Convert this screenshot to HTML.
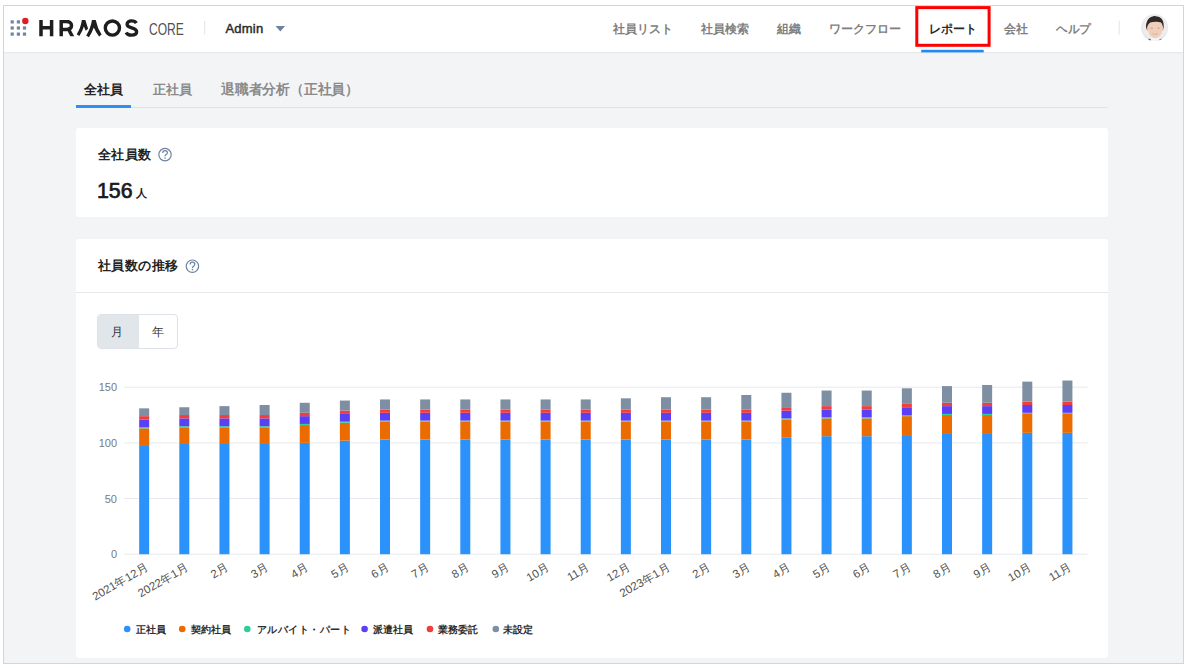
<!DOCTYPE html>
<html><head><meta charset="utf-8">
<style>
*{box-sizing:border-box;margin:0;padding:0}
html,body{width:1189px;height:668px;overflow:hidden;background:#fff;font-family:"Liberation Sans",sans-serif;color:#222}
.abs{position:absolute}
svg{font-family:"Liberation Sans",sans-serif}
#frame{position:absolute;left:3px;top:5px;width:1181px;height:659px;border:1px solid #d5d5d5;background:#f3f4f6;overflow:hidden}
#hdr{position:absolute;left:0;top:0;width:1179px;height:46px;background:#fff;box-shadow:0 1px 1.5px rgba(0,0,0,.06)}
.t{position:absolute;white-space:nowrap;line-height:1}
.nav{font-size:12px;font-weight:bold;color:#808080;top:23px !important}
.leg{font-size:10px;font-weight:bold;color:#2e2e2e;margin-top:1.5px;margin-left:1.5px;letter-spacing:0.25px}
.hd{-webkit-text-stroke:0.2px #222}
.card{position:absolute;background:#fff;border-radius:3px}
</style></head><body>
<div id="frame">
 <div id="hdr"></div>
</div>

<!-- header texts -->
<div class="t" style="left:148.5px;top:20.7px;font-size:16.5px;color:#505050;transform:scaleX(0.73);transform-origin:0 0">CORE</div>
<div class="t" style="left:225.5px;top:21.5px;font-size:13px;font-weight:normal;-webkit-text-stroke:0.45px #2a2a2a;color:#2a2a2a;letter-spacing:0.2px">Admin</div>
<div class="t nav" style="left:613px;top:22px">社員リスト</div>
<div class="t nav" style="left:701px;top:22px">社員検索</div>
<div class="t nav" style="left:777px;top:22px">組織</div>
<div class="t nav" style="left:828.5px;top:22px">ワークフロー</div>
<div class="t nav" style="left:929px;top:22px;color:#2a2a2a">レポート</div>
<div class="t nav" style="left:1004px;top:22px">会社</div>
<div class="t nav" style="left:1056px;top:22px;transform:scaleX(0.97);transform-origin:0 0">ヘルプ</div>
<!-- tabs -->
<div class="abs" style="left:76px;top:107px;width:1032px;height:1px;background:#dfe2e6"></div>
<div class="abs" style="left:76px;top:105px;width:55px;height:3px;background:#2b8ff5"></div>
<div class="t" style="left:84px;top:83px;font-size:13px;font-weight:bold;color:#222">全社員</div>
<div class="t" style="left:153px;top:83px;font-size:13px;font-weight:bold;color:#8a8a8a">正社員</div>
<div class="t" style="left:220.5px;top:82px;font-size:14px;font-weight:bold;color:#8a8a8a;transform:scaleX(0.985);transform-origin:0 0">退職者分析（正社員）</div>
<!-- card1 -->
<div class="card" style="left:76px;top:128px;width:1032px;height:89px"></div>
<div class="t" style="left:98px;top:147.5px;font-size:13px;font-weight:bold;color:#222;letter-spacing:0.3px">全社員数</div>
<div class="t" style="left:96.5px;top:179.5px;font-size:22px;font-weight:normal;-webkit-text-stroke:0.7px #1a1a1a;color:#1a1a1a;transform:scaleX(0.97);transform-origin:0 0">156</div>
<div class="t" style="left:136px;top:188px;font-size:11px;font-weight:bold;color:#1a1a1a">人</div>
<!-- card2 -->
<div class="card" style="left:76px;top:239px;width:1032px;height:419px"></div>
<div class="abs" style="left:76px;top:292px;width:1032px;height:1px;background:#e6e8eb"></div>
<div class="t" style="left:97.5px;top:258.5px;font-size:13px;font-weight:bold;color:#222;letter-spacing:0.5px">社員数の推移</div>
<div class="abs" style="left:96.5px;top:314px;width:81.5px;height:34.5px;border:1px solid #dde2e8;border-radius:4px;overflow:hidden;background:#fff">
 <div class="abs" style="left:0;top:0;width:41px;height:33px;background:#e1e6eb"></div>
</div>
<div class="t" style="left:111px;top:326px;font-size:12px;color:#333">月</div>
<div class="t" style="left:151.5px;top:326px;font-size:12px;color:#333">年</div>
<!-- legend -->
<div class="t leg" style="left:134px;top:623px">正社員</div>
<div class="t leg" style="left:189px;top:623px">契約社員</div>
<div class="t leg" style="left:255px;top:623px;letter-spacing:0.55px">アルバイト・パート</div>
<div class="t leg" style="left:371px;top:623px">派遣社員</div>
<div class="t leg" style="left:436px;top:623px">業務委託</div>
<div class="t leg" style="left:501px;top:623px">未設定</div>
<!-- page-space overlay -->
<svg class="abs" style="left:0;top:0" width="1189" height="668" viewBox="0 0 1189 668">
 <!-- logo dots -->
 <g fill="#6f86a3">
  <rect x="10.6" y="20.3" width="3.2" height="3.2"/><rect x="16.8" y="20.3" width="3.2" height="3.2"/>
  <rect x="10.6" y="26.4" width="3.2" height="3.2"/><rect x="16.8" y="26.4" width="3.2" height="3.2"/><rect x="22.9" y="26.4" width="3.2" height="3.2"/>
  <rect x="10.6" y="32.5" width="3.2" height="3.2"/><rect x="16.8" y="32.5" width="3.2" height="3.2"/><rect x="22.9" y="32.5" width="3.2" height="3.2"/>
 </g>
 <circle cx="25.3" cy="21" r="3.2" fill="#dc1e26"/>
 <!-- HRMOS -->
 <defs><clipPath id="lc"><rect x="30" y="19.9" width="120" height="17.5"/></clipPath></defs>
 <g fill="none" stroke="#1e1e1e" stroke-width="3.5" clip-path="url(#lc)">
  <path d="M41 19.9V36.3M51.6 19.9V36.3M41 27.7H51.6"/>
  <path d="M61.2 36.3V21.5H66.3C69.8 21.5 71.5 23.4 71.5 25.5C71.5 27.7 69.8 29.4 66.3 29.4H61.2"/><path stroke="none" fill="#1e1e1e" d="M66.2 28.6L70 28.6L74.2 36.3L70.3 36.3Z"/>
  <path stroke="none" fill="#1e1e1e" d="M81.9 19.8H85.3L88.1 28.7L85.7 30.7L83.9 26.4Q82.4 31.5 79.3 35.9L76.7 34.2Q80.6 28.5 81.9 19.8ZM92 19.8H95.7Q97.3 28 101.6 34.6L99.1 36.5Q95.6 31.8 93.8 27.4Q92 32.5 88.9 37.3L86.2 35.4Q90.5 29 92 19.8Z"/>
 </g>
 <g fill="none" stroke="#1e1e1e" stroke-width="3.4">
  <circle cx="112.4" cy="28.05" r="7.1"/>
  <path d="M136.3 23.1C135.3 21.3 133.5 20.9 131.5 20.9C128.8 20.9 127.1 22.3 127.1 24.3C127.1 29.1 136.6 26.8 136.6 31.8C136.6 34.1 134.5 35.1 131.5 35.1C129.1 35.1 127 34.2 126.1 32.4"/>
 </g>
 <!-- separators -->
 <rect x="204.2" y="21" width="1" height="13.5" fill="#dfe3e8"/>
 <rect x="1118.7" y="20.7" width="1" height="14" fill="#dfe3e8"/>
 <!-- caret -->
 <path d="M275.5 26H285.1L280.3 31.5Z" fill="#6f83a0"/>
 <!-- avatar -->
 <defs>
  <radialGradient id="avbg" cx="0.5" cy="0.45" r="0.55"><stop offset="0" stop-color="#f6f6f6"/><stop offset="0.75" stop-color="#ececec"/><stop offset="1" stop-color="#d9d9d9"/></radialGradient>
  <clipPath id="avc"><circle cx="1154.6" cy="27.6" r="13.5"/></clipPath>
 </defs>
 <g clip-path="url(#avc)">
  <rect x="1140" y="13" width="30" height="30" fill="url(#avbg)"/>
  <path d="M1147 41C1148 37.5 1151 37 1155 37C1159 37 1162 37.5 1163 41Z" fill="#f4f4f4"/>
  <rect x="1148.5" y="38.8" width="2.2" height="1.6" fill="#50607a"/><rect x="1159.5" y="38.8" width="2.2" height="1.6" fill="#6a7a92"/>
  <ellipse cx="1147.6" cy="28.8" rx="1.2" ry="2" fill="#dfb49a"/>
  <ellipse cx="1162.6" cy="28.8" rx="1.2" ry="2" fill="#dfb49a"/>
  <ellipse cx="1155.2" cy="29.2" rx="7.2" ry="9" fill="#efcfbb"/><rect x="1147.5" y="20.5" width="15" height="9" rx="3" fill="#efcfbb"/><path d="M1150.6 28.2h2.2M1157.4 28.2h2.2" stroke="#7a5a50" stroke-width="0.8" opacity="0.6"/>
  <path d="M1146.2 29.5C1145.2 22 1148.5 16.6 1153.4 16.2C1154.5 15.8 1156 16 1157 16.6C1161.5 17 1164.5 21 1163.6 28.8C1162.6 26 1162.3 23.5 1161 22.4C1158.5 21.6 1154 21.2 1150.2 22.4C1148.6 23.2 1147.6 25.5 1146.2 29.5Z" fill="#2d2a28"/>
  <path d="M1152.3 33.6C1153.8 34.6 1156.6 34.6 1158.1 33.6" stroke="#d9a79a" stroke-width="0.9" fill="none"/>
 </g>
 
 <!-- help icons -->
 <g fill="none" stroke="#6f84a0" stroke-width="1.2">
  <circle cx="165" cy="154.6" r="6.2"/><path d="M162.70 153.00C162.70 151.40 163.80 150.60 165.00 150.60C166.40 150.60 167.40 151.50 167.40 152.70C167.40 154.40 165.00 154.70 165.00 156.30"/>
  <circle cx="192.4" cy="266.2" r="6.2"/><path d="M190.10 264.60C190.10 263.00 191.20 262.20 192.40 262.20C193.80 262.20 194.80 263.10 194.80 264.30C194.80 266.00 192.40 266.30 192.40 267.90"/>
 </g>
 <g fill="#6f84a0"><circle cx="165" cy="158" r="0.8"/><circle cx="192.4" cy="269.6" r="0.8"/></g>
 <!-- grid -->
 <g fill="#e6e9ed">
  <rect x="124.1" y="386.7" width="963.4" height="1"/>
  <rect x="124.1" y="442.4" width="963.4" height="1"/>
  <rect x="124.1" y="498" width="963.4" height="1"/>
  <rect x="124.1" y="553.7" width="963.4" height="1"/>
 </g>
 <g fill="#7a7a7a" font-size="11" text-anchor="end">
  <text x="117" y="391">150</text>
  <text x="117" y="447">100</text>
  <text x="117" y="502.6">50</text>
  <text x="117" y="558.3">0</text>
 </g>
 <rect x="139.17" y="445.09" width="10" height="109.11" fill="#2b92fb"/>
<rect x="139.17" y="428.39" width="10" height="16.70" fill="#eb6b00"/>
<rect x="139.17" y="427.28" width="10" height="1.11" fill="#2ecf95"/>
<rect x="139.17" y="419.49" width="10" height="7.79" fill="#5b3ff5"/>
<rect x="139.17" y="416.15" width="10" height="3.34" fill="#f23d3d"/>
<rect x="139.17" y="408.35" width="10" height="7.79" fill="#7e8fa3"/>
<rect x="179.31" y="443.98" width="10" height="110.22" fill="#2b92fb"/>
<rect x="179.31" y="427.28" width="10" height="16.70" fill="#eb6b00"/>
<rect x="179.31" y="426.17" width="10" height="1.11" fill="#2ecf95"/>
<rect x="179.31" y="418.37" width="10" height="7.79" fill="#5b3ff5"/>
<rect x="179.31" y="415.03" width="10" height="3.34" fill="#f23d3d"/>
<rect x="179.31" y="407.24" width="10" height="7.79" fill="#7e8fa3"/>
<rect x="219.45" y="443.98" width="10" height="110.22" fill="#2b92fb"/>
<rect x="219.45" y="427.28" width="10" height="16.70" fill="#eb6b00"/>
<rect x="219.45" y="426.17" width="10" height="1.11" fill="#2ecf95"/>
<rect x="219.45" y="418.37" width="10" height="7.79" fill="#5b3ff5"/>
<rect x="219.45" y="415.03" width="10" height="3.34" fill="#f23d3d"/>
<rect x="219.45" y="406.13" width="10" height="8.91" fill="#7e8fa3"/>
<rect x="259.60" y="443.98" width="10" height="110.22" fill="#2b92fb"/>
<rect x="259.60" y="427.28" width="10" height="16.70" fill="#eb6b00"/>
<rect x="259.60" y="426.17" width="10" height="1.11" fill="#2ecf95"/>
<rect x="259.60" y="418.37" width="10" height="7.79" fill="#5b3ff5"/>
<rect x="259.60" y="415.03" width="10" height="3.34" fill="#f23d3d"/>
<rect x="259.60" y="405.01" width="10" height="10.02" fill="#7e8fa3"/>
<rect x="299.74" y="442.87" width="10" height="111.33" fill="#2b92fb"/>
<rect x="299.74" y="425.05" width="10" height="17.81" fill="#eb6b00"/>
<rect x="299.74" y="423.94" width="10" height="1.11" fill="#2ecf95"/>
<rect x="299.74" y="416.15" width="10" height="7.79" fill="#5b3ff5"/>
<rect x="299.74" y="412.81" width="10" height="3.34" fill="#f23d3d"/>
<rect x="299.74" y="402.79" width="10" height="10.02" fill="#7e8fa3"/>
<rect x="339.88" y="440.64" width="10" height="113.56" fill="#2b92fb"/>
<rect x="339.88" y="422.83" width="10" height="17.81" fill="#eb6b00"/>
<rect x="339.88" y="421.71" width="10" height="1.11" fill="#2ecf95"/>
<rect x="339.88" y="413.92" width="10" height="7.79" fill="#5b3ff5"/>
<rect x="339.88" y="410.58" width="10" height="3.34" fill="#f23d3d"/>
<rect x="339.88" y="400.56" width="10" height="10.02" fill="#7e8fa3"/>
<rect x="380.02" y="439.53" width="10" height="114.67" fill="#2b92fb"/>
<rect x="380.02" y="421.71" width="10" height="17.81" fill="#eb6b00"/>
<rect x="380.02" y="420.60" width="10" height="1.11" fill="#2ecf95"/>
<rect x="380.02" y="412.81" width="10" height="7.79" fill="#5b3ff5"/>
<rect x="380.02" y="409.47" width="10" height="3.34" fill="#f23d3d"/>
<rect x="380.02" y="399.45" width="10" height="10.02" fill="#7e8fa3"/>
<rect x="420.16" y="439.53" width="10" height="114.67" fill="#2b92fb"/>
<rect x="420.16" y="421.71" width="10" height="17.81" fill="#eb6b00"/>
<rect x="420.16" y="420.60" width="10" height="1.11" fill="#2ecf95"/>
<rect x="420.16" y="412.81" width="10" height="7.79" fill="#5b3ff5"/>
<rect x="420.16" y="409.47" width="10" height="3.34" fill="#f23d3d"/>
<rect x="420.16" y="399.45" width="10" height="10.02" fill="#7e8fa3"/>
<rect x="460.30" y="439.53" width="10" height="114.67" fill="#2b92fb"/>
<rect x="460.30" y="421.71" width="10" height="17.81" fill="#eb6b00"/>
<rect x="460.30" y="420.60" width="10" height="1.11" fill="#2ecf95"/>
<rect x="460.30" y="412.81" width="10" height="7.79" fill="#5b3ff5"/>
<rect x="460.30" y="409.47" width="10" height="3.34" fill="#f23d3d"/>
<rect x="460.30" y="399.45" width="10" height="10.02" fill="#7e8fa3"/>
<rect x="500.45" y="439.53" width="10" height="114.67" fill="#2b92fb"/>
<rect x="500.45" y="421.71" width="10" height="17.81" fill="#eb6b00"/>
<rect x="500.45" y="420.60" width="10" height="1.11" fill="#2ecf95"/>
<rect x="500.45" y="412.81" width="10" height="7.79" fill="#5b3ff5"/>
<rect x="500.45" y="409.47" width="10" height="3.34" fill="#f23d3d"/>
<rect x="500.45" y="399.45" width="10" height="10.02" fill="#7e8fa3"/>
<rect x="540.59" y="439.53" width="10" height="114.67" fill="#2b92fb"/>
<rect x="540.59" y="421.71" width="10" height="17.81" fill="#eb6b00"/>
<rect x="540.59" y="420.60" width="10" height="1.11" fill="#2ecf95"/>
<rect x="540.59" y="412.81" width="10" height="7.79" fill="#5b3ff5"/>
<rect x="540.59" y="409.47" width="10" height="3.34" fill="#f23d3d"/>
<rect x="540.59" y="399.45" width="10" height="10.02" fill="#7e8fa3"/>
<rect x="580.73" y="439.53" width="10" height="114.67" fill="#2b92fb"/>
<rect x="580.73" y="421.71" width="10" height="17.81" fill="#eb6b00"/>
<rect x="580.73" y="420.60" width="10" height="1.11" fill="#2ecf95"/>
<rect x="580.73" y="412.81" width="10" height="7.79" fill="#5b3ff5"/>
<rect x="580.73" y="409.47" width="10" height="3.34" fill="#f23d3d"/>
<rect x="580.73" y="399.45" width="10" height="10.02" fill="#7e8fa3"/>
<rect x="620.87" y="439.53" width="10" height="114.67" fill="#2b92fb"/>
<rect x="620.87" y="421.71" width="10" height="17.81" fill="#eb6b00"/>
<rect x="620.87" y="420.60" width="10" height="1.11" fill="#2ecf95"/>
<rect x="620.87" y="412.81" width="10" height="7.79" fill="#5b3ff5"/>
<rect x="620.87" y="409.47" width="10" height="3.34" fill="#f23d3d"/>
<rect x="620.87" y="398.33" width="10" height="11.13" fill="#7e8fa3"/>
<rect x="661.01" y="439.53" width="10" height="114.67" fill="#2b92fb"/>
<rect x="661.01" y="421.71" width="10" height="17.81" fill="#eb6b00"/>
<rect x="661.01" y="420.60" width="10" height="1.11" fill="#2ecf95"/>
<rect x="661.01" y="412.81" width="10" height="7.79" fill="#5b3ff5"/>
<rect x="661.01" y="409.47" width="10" height="3.34" fill="#f23d3d"/>
<rect x="661.01" y="397.22" width="10" height="12.25" fill="#7e8fa3"/>
<rect x="701.15" y="439.53" width="10" height="114.67" fill="#2b92fb"/>
<rect x="701.15" y="421.71" width="10" height="17.81" fill="#eb6b00"/>
<rect x="701.15" y="420.60" width="10" height="1.11" fill="#2ecf95"/>
<rect x="701.15" y="412.81" width="10" height="7.79" fill="#5b3ff5"/>
<rect x="701.15" y="409.47" width="10" height="3.34" fill="#f23d3d"/>
<rect x="701.15" y="397.22" width="10" height="12.25" fill="#7e8fa3"/>
<rect x="741.30" y="439.53" width="10" height="114.67" fill="#2b92fb"/>
<rect x="741.30" y="421.71" width="10" height="17.81" fill="#eb6b00"/>
<rect x="741.30" y="420.60" width="10" height="1.11" fill="#2ecf95"/>
<rect x="741.30" y="412.81" width="10" height="7.79" fill="#5b3ff5"/>
<rect x="741.30" y="409.47" width="10" height="3.34" fill="#f23d3d"/>
<rect x="741.30" y="394.99" width="10" height="14.47" fill="#7e8fa3"/>
<rect x="781.44" y="437.30" width="10" height="116.90" fill="#2b92fb"/>
<rect x="781.44" y="419.49" width="10" height="17.81" fill="#eb6b00"/>
<rect x="781.44" y="418.37" width="10" height="1.11" fill="#2ecf95"/>
<rect x="781.44" y="410.58" width="10" height="7.79" fill="#5b3ff5"/>
<rect x="781.44" y="407.24" width="10" height="3.34" fill="#f23d3d"/>
<rect x="781.44" y="392.77" width="10" height="14.47" fill="#7e8fa3"/>
<rect x="821.58" y="436.19" width="10" height="118.01" fill="#2b92fb"/>
<rect x="821.58" y="418.37" width="10" height="17.81" fill="#eb6b00"/>
<rect x="821.58" y="417.26" width="10" height="1.11" fill="#2ecf95"/>
<rect x="821.58" y="409.47" width="10" height="7.79" fill="#5b3ff5"/>
<rect x="821.58" y="406.13" width="10" height="3.34" fill="#f23d3d"/>
<rect x="821.58" y="390.54" width="10" height="15.59" fill="#7e8fa3"/>
<rect x="861.72" y="436.19" width="10" height="118.01" fill="#2b92fb"/>
<rect x="861.72" y="418.37" width="10" height="17.81" fill="#eb6b00"/>
<rect x="861.72" y="417.26" width="10" height="1.11" fill="#2ecf95"/>
<rect x="861.72" y="409.47" width="10" height="7.79" fill="#5b3ff5"/>
<rect x="861.72" y="406.13" width="10" height="3.34" fill="#f23d3d"/>
<rect x="861.72" y="390.54" width="10" height="15.59" fill="#7e8fa3"/>
<rect x="901.86" y="435.07" width="10" height="119.13" fill="#2b92fb"/>
<rect x="901.86" y="416.15" width="10" height="18.93" fill="#eb6b00"/>
<rect x="901.86" y="415.03" width="10" height="1.11" fill="#2ecf95"/>
<rect x="901.86" y="407.24" width="10" height="7.79" fill="#5b3ff5"/>
<rect x="901.86" y="403.90" width="10" height="3.34" fill="#f23d3d"/>
<rect x="901.86" y="388.31" width="10" height="15.59" fill="#7e8fa3"/>
<rect x="942.00" y="433.96" width="10" height="120.24" fill="#2b92fb"/>
<rect x="942.00" y="415.03" width="10" height="18.93" fill="#eb6b00"/>
<rect x="942.00" y="413.92" width="10" height="1.11" fill="#2ecf95"/>
<rect x="942.00" y="406.13" width="10" height="7.79" fill="#5b3ff5"/>
<rect x="942.00" y="402.79" width="10" height="3.34" fill="#f23d3d"/>
<rect x="942.00" y="386.09" width="10" height="16.70" fill="#7e8fa3"/>
<rect x="982.15" y="433.96" width="10" height="120.24" fill="#2b92fb"/>
<rect x="982.15" y="415.03" width="10" height="18.93" fill="#eb6b00"/>
<rect x="982.15" y="413.92" width="10" height="1.11" fill="#2ecf95"/>
<rect x="982.15" y="406.13" width="10" height="7.79" fill="#5b3ff5"/>
<rect x="982.15" y="402.79" width="10" height="3.34" fill="#f23d3d"/>
<rect x="982.15" y="384.97" width="10" height="17.81" fill="#7e8fa3"/>
<rect x="1022.29" y="432.85" width="10" height="121.35" fill="#2b92fb"/>
<rect x="1022.29" y="413.92" width="10" height="18.93" fill="#eb6b00"/>
<rect x="1022.29" y="412.81" width="10" height="1.11" fill="#2ecf95"/>
<rect x="1022.29" y="405.01" width="10" height="7.79" fill="#5b3ff5"/>
<rect x="1022.29" y="401.67" width="10" height="3.34" fill="#f23d3d"/>
<rect x="1022.29" y="381.63" width="10" height="20.04" fill="#7e8fa3"/>
<rect x="1062.43" y="432.85" width="10" height="121.35" fill="#2b92fb"/>
<rect x="1062.43" y="413.92" width="10" height="18.93" fill="#eb6b00"/>
<rect x="1062.43" y="412.81" width="10" height="1.11" fill="#2ecf95"/>
<rect x="1062.43" y="405.01" width="10" height="7.79" fill="#5b3ff5"/>
<rect x="1062.43" y="401.67" width="10" height="3.34" fill="#f23d3d"/>
<rect x="1062.43" y="380.52" width="10" height="21.15" fill="#7e8fa3"/>

 <g fill="#505050" font-size="11.5">
 <text transform="translate(147.2,566) rotate(-30)" text-anchor="end" dy="0.35em">2021年12月</text>
<text transform="translate(187.3,566) rotate(-30)" text-anchor="end" dy="0.35em">2022年1月</text>
<text transform="translate(227.5,566) rotate(-30)" text-anchor="end" dy="0.35em">2月</text>
<text transform="translate(267.6,566) rotate(-30)" text-anchor="end" dy="0.35em">3月</text>
<text transform="translate(307.7,566) rotate(-30)" text-anchor="end" dy="0.35em">4月</text>
<text transform="translate(347.9,566) rotate(-30)" text-anchor="end" dy="0.35em">5月</text>
<text transform="translate(388.0,566) rotate(-30)" text-anchor="end" dy="0.35em">6月</text>
<text transform="translate(428.2,566) rotate(-30)" text-anchor="end" dy="0.35em">7月</text>
<text transform="translate(468.3,566) rotate(-30)" text-anchor="end" dy="0.35em">8月</text>
<text transform="translate(508.4,566) rotate(-30)" text-anchor="end" dy="0.35em">9月</text>
<text transform="translate(548.6,566) rotate(-30)" text-anchor="end" dy="0.35em">10月</text>
<text transform="translate(588.7,566) rotate(-30)" text-anchor="end" dy="0.35em">11月</text>
<text transform="translate(628.9,566) rotate(-30)" text-anchor="end" dy="0.35em">12月</text>
<text transform="translate(669.0,566) rotate(-30)" text-anchor="end" dy="0.35em">2023年1月</text>
<text transform="translate(709.2,566) rotate(-30)" text-anchor="end" dy="0.35em">2月</text>
<text transform="translate(749.3,566) rotate(-30)" text-anchor="end" dy="0.35em">3月</text>
<text transform="translate(789.4,566) rotate(-30)" text-anchor="end" dy="0.35em">4月</text>
<text transform="translate(829.6,566) rotate(-30)" text-anchor="end" dy="0.35em">5月</text>
<text transform="translate(869.7,566) rotate(-30)" text-anchor="end" dy="0.35em">6月</text>
<text transform="translate(909.9,566) rotate(-30)" text-anchor="end" dy="0.35em">7月</text>
<text transform="translate(950.0,566) rotate(-30)" text-anchor="end" dy="0.35em">8月</text>
<text transform="translate(990.1,566) rotate(-30)" text-anchor="end" dy="0.35em">9月</text>
<text transform="translate(1030.3,566) rotate(-30)" text-anchor="end" dy="0.35em">10月</text>
<text transform="translate(1070.4,566) rotate(-30)" text-anchor="end" dy="0.35em">11月</text>

 </g>
 <!-- legend dots -->
 <circle cx="127.2" cy="629" r="3.3" fill="#2b92fb"/>
 <circle cx="182.2" cy="629" r="3.3" fill="#eb6b00"/>
 <circle cx="247.3" cy="629" r="3.3" fill="#2ecf95"/>
 <circle cx="364.6" cy="629" r="3.3" fill="#5b3ff5"/>
 <circle cx="430" cy="629" r="3.3" fill="#f23d3d"/>
 <circle cx="495.8" cy="629" r="3.3" fill="#7e8fa3"/>
 <!-- red box -->
 <rect x="916.8" y="7.6" width="72.3" height="37.7" fill="none" stroke="#ff0000" stroke-width="3"/>
 <!-- nav underline -->
 <rect x="921.2" y="49.8" width="62.5" height="2.6" fill="#2089f5"/>
</svg>
</body></html>
